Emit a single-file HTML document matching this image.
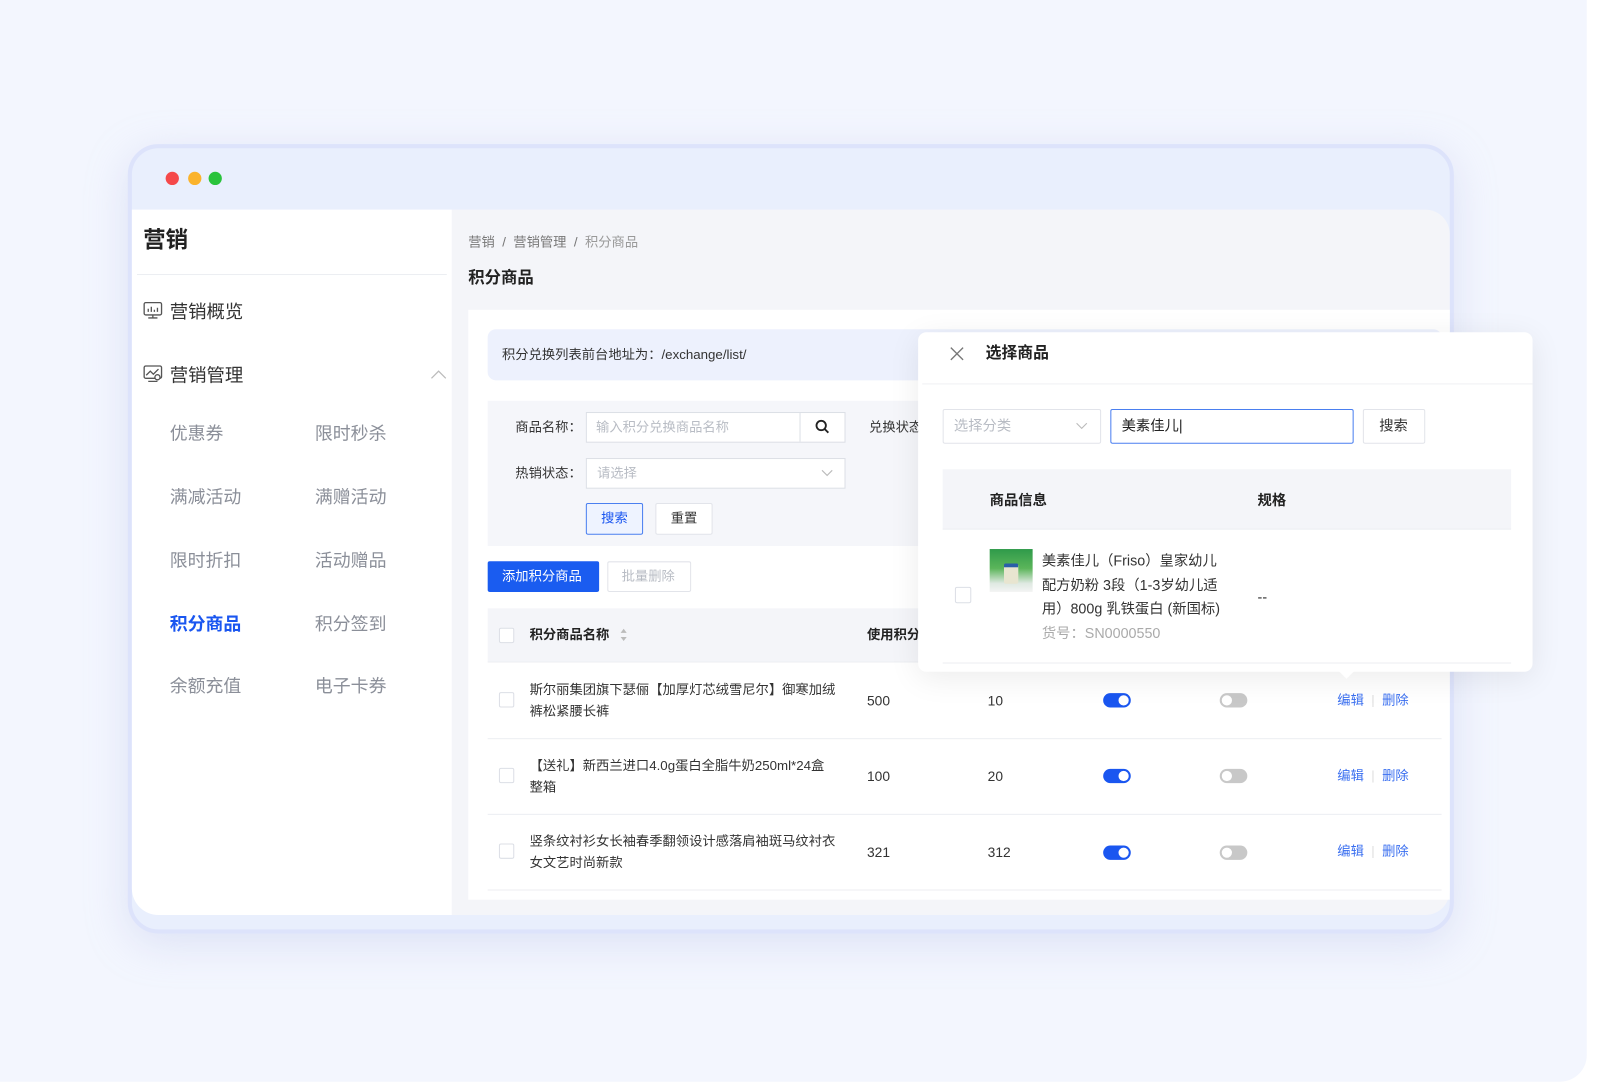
<!DOCTYPE html>
<html><head><meta charset="utf-8">
<style>
*{margin:0;padding:0;box-sizing:border-box}
html,body{width:1600px;height:1080px;overflow:hidden;background:#fff}
body{font-family:"Liberation Sans","Noto Sans CJK SC",sans-serif;color:#333}
#w{position:absolute;left:0;top:0;width:1565px;height:1057px;transform:scale(1.0224);transform-origin:0 0}
.a{position:absolute}
.t{position:absolute;white-space:nowrap;line-height:1}
.bg{left:0;top:0;width:1552px;height:1058px;background:#f3f6fe;border-radius:0 0 26px 0}
.win{left:125px;top:141px;width:1297px;height:772px;border:4px solid #dde3fb;border-radius:30px;background:#e9effd;box-shadow:0 10px 40px rgba(180,190,230,.35)}
.dot{width:13px;height:13px;border-radius:50%;top:168px}
.side{left:129px;top:205px;width:313px;height:690px;background:#fff;border-bottom-left-radius:26px}
.main{left:442px;top:205px;width:976px;height:690px;background:#f4f5f9;border-top-right-radius:24px;border-bottom-right-radius:24px}
.sub{font-size:17.5px;color:#8b8f99}
.cb{width:15px;height:15px;border:1px solid #dcdfe6;border-radius:2px;background:#fff}
.tog{width:27px;height:14px;border-radius:7px}
.tog i{position:absolute;top:2px;width:10px;height:10px;border-radius:50%;background:#fff}
.lk{font-size:13px;color:#3a6ff0}
.row{font-size:13px;color:#333;line-height:21px}
</style></head><body><div id="w">
<div class="a bg"></div>
<div class="a win"></div>
<div class="a dot" style="left:162px;background:#f5484a"></div>
<div class="a dot" style="left:184px;background:#fbb32c"></div>
<div class="a dot" style="left:204px;background:#2ac33c"></div>
<div class="a side"></div>
<div class="a main"></div>
<div class="t" style="left:140px;top:224px;font-size:22px;font-weight:bold;color:#222">营销</div>
<div class="a" style="left:134px;top:268px;width:303px;height:1px;background:#eceef2"></div>
<svg class="a" style="left:140px;top:295px" width="19" height="18" viewBox="0 0 19 18" fill="none" stroke="#555" stroke-width="1.3"><rect x="1" y="1" width="17" height="12" rx="1.5"/><path d="M5 10V7M8 10V5M11 10V8M14 10V6M5 16h9M9.5 13v3"/></svg>
<div class="t" style="left:166px;top:296px;font-size:18px;color:#333">营销概览</div>
<svg class="a" style="left:140px;top:357px" width="19" height="18" viewBox="0 0 19 18" fill="none" stroke="#555" stroke-width="1.3"><rect x="1" y="1" width="17" height="12" rx="1.5"/><path d="M3 10l4-4 3 3 5-5M5 16h9"/><circle cx="14" cy="12" r="2.5" fill="#fff"/></svg>
<div class="t" style="left:166px;top:358px;font-size:18px;color:#333">营销管理</div>
<svg class="a" style="left:421px;top:361px" width="16" height="10" viewBox="0 0 16 10" fill="none" stroke="#bbb" stroke-width="1.2"><path d="M1 9l7-7 7 7"/></svg>
<div class="t sub" style="left:166px;top:416px">优惠券</div><div class="t sub" style="left:308px;top:416px">限时秒杀</div>
<div class="t sub" style="left:166px;top:478px">满减活动</div><div class="t sub" style="left:308px;top:478px">满赠活动</div>
<div class="t sub" style="left:166px;top:540px">限时折扣</div><div class="t sub" style="left:308px;top:540px">活动赠品</div>
<div class="t sub" style="left:166px;top:602px;color:#1a56f0;font-weight:bold">积分商品</div><div class="t sub" style="left:308px;top:602px">积分签到</div>
<div class="t sub" style="left:166px;top:663px">余额充值</div><div class="t sub" style="left:308px;top:663px">电子卡券</div>
<div class="t" style="left:458px;top:230px;font-size:13px;color:#777">营销 &nbsp;/ &nbsp;营销管理 &nbsp;/ &nbsp;<span style="color:#999">积分商品</span></div>
<div class="t" style="left:458px;top:265px;font-size:16px;font-weight:bold;color:#222">积分商品</div>
<div class="a" style="left:458px;top:303px;width:960px;height:577px;background:#fff"></div>
<div class="a" style="left:477px;top:322px;width:933px;height:50px;background:#edf1fd;border-radius:8px"></div>
<div class="t" style="left:491px;top:340px;font-size:13px;color:#333">积分兑换列表前台地址为：/exchange/list/</div>
<div class="a" style="left:477px;top:392px;width:933px;height:142px;background:#f5f6fa"></div>
<div class="t" style="left:504px;top:411px;font-size:13px;color:#333">商品名称：</div>
<div class="a" style="left:573px;top:403px;width:254px;height:30px;background:#fff;border:1px solid #dcdfe6"></div>
<div class="a" style="left:782px;top:404px;width:1px;height:28px;background:#dcdfe6"></div>
<div class="t" style="left:583px;top:411px;font-size:13px;color:#b8bcc4">输入积分兑换商品名称</div>
<svg class="a" style="left:797px;top:410px" width="15" height="15" viewBox="0 0 15 15" fill="none" stroke="#222" stroke-width="1.8"><circle cx="6.2" cy="6.2" r="4.6"/><path d="M9.6 9.6l3.6 3.6"/></svg>
<div class="t" style="left:850px;top:411px;font-size:13px;color:#333">兑换状态</div>
<div class="t" style="left:504px;top:456px;font-size:13px;color:#333">热销状态：</div>
<div class="a" style="left:573px;top:448px;width:254px;height:30px;background:#fff;border:1px solid #dcdfe6"></div>
<div class="t" style="left:584px;top:456px;font-size:13px;color:#b8bcc4">请选择</div>
<svg class="a" style="left:803px;top:459px" width="12" height="8" viewBox="0 0 12 8" fill="none" stroke="#bbb" stroke-width="1.1"><path d="M1 1l5 5 5-5"/></svg>
<div class="a" style="left:573px;top:492px;width:56px;height:31px;background:#eef3ff;border:1px solid #4a7ff0;border-radius:2px"></div>
<div class="t" style="left:588px;top:500px;font-size:13px;color:#1a56f0">搜索</div>
<div class="a" style="left:641px;top:492px;width:56px;height:31px;background:#fff;border:1px solid #e2e4ea;border-radius:2px"></div>
<div class="t" style="left:656px;top:500px;font-size:13px;color:#333">重置</div>
<div class="a" style="left:477px;top:549px;width:109px;height:30px;background:#1a5cf0;border-radius:2px"></div>
<div class="t" style="left:491px;top:557px;font-size:13px;color:#fff">添加积分商品</div>
<div class="a" style="left:594px;top:549px;width:82px;height:30px;background:#fff;border:1px solid #e2e4ea;border-radius:2px"></div>
<div class="t" style="left:608px;top:557px;font-size:13px;color:#b8bcc4">批量删除</div>
<div class="a" style="left:477px;top:595px;width:933px;height:53px;background:#f4f5f9;border-bottom:1px solid #eceef2"></div>
<div class="a cb" style="left:488px;top:614px"></div>
<div class="t" style="left:518px;top:614px;font-size:13px;font-weight:bold;color:#222">积分商品名称</div>
<svg class="a" style="left:606px;top:614px" width="8" height="14" viewBox="0 0 8 14" fill="#bbb"><path d="M4 1l3 4H1zM4 13l3-4H1z"/></svg>
<div class="t" style="left:848px;top:614px;font-size:13px;font-weight:bold;color:#222">使用积分</div>
<div class="a" style="left:477px;top:722px;width:933px;height:1px;background:#eceef2"></div>
<div class="a" style="left:477px;top:796px;width:933px;height:1px;background:#eceef2"></div>
<div class="a" style="left:477px;top:870px;width:933px;height:1px;background:#eceef2"></div>
<div class="a cb" style="left:488px;top:677px"></div>
<div class="a row" style="left:518px;top:664px;white-space:nowrap">斯尔丽集团旗下瑟俪【加厚灯芯绒雪尼尔】御寒加绒<br>裤松紧腰长裤</div>
<div class="t" style="left:848px;top:679px;font-size:13.5px">500</div><div class="t" style="left:966px;top:679px;font-size:13.5px">10</div>
<div class="a cb" style="left:488px;top:751px"></div>
<div class="a row" style="left:518px;top:738px;white-space:nowrap">【送礼】新西兰进口4.0g蛋白全脂牛奶250ml*24盒<br>整箱</div>
<div class="t" style="left:848px;top:753px;font-size:13.5px">100</div><div class="t" style="left:966px;top:753px;font-size:13.5px">20</div>
<div class="a cb" style="left:488px;top:825px"></div>
<div class="a row" style="left:518px;top:812px;white-space:nowrap">竖条纹衬衫女长袖春季翻领设计感落肩袖斑马纹衬衣<br>女文艺时尚新款</div>
<div class="t" style="left:848px;top:827px;font-size:13.5px">321</div><div class="t" style="left:966px;top:827px;font-size:13.5px">312</div>
<div class="a tog" style="left:1079px;top:678px;background:#1a56f0"><i style="left:15px"></i></div>
<div class="a tog" style="left:1193px;top:678px;background:#c8c8c8"><i style="left:2px"></i></div>
<div class="a tog" style="left:1079px;top:752px;background:#1a56f0"><i style="left:15px"></i></div>
<div class="a tog" style="left:1193px;top:752px;background:#c8c8c8"><i style="left:2px"></i></div>
<div class="a tog" style="left:1079px;top:827px;background:#1a56f0"><i style="left:15px"></i></div>
<div class="a tog" style="left:1193px;top:827px;background:#c8c8c8"><i style="left:2px"></i></div>
<div class="t lk" style="left:1308px;top:678px">编辑 <span style="color:#ddd">&nbsp;|&nbsp;</span> 删除</div>
<div class="t lk" style="left:1308px;top:752px">编辑 <span style="color:#ddd">&nbsp;|&nbsp;</span> 删除</div>
<div class="t lk" style="left:1308px;top:826px">编辑 <span style="color:#ddd">&nbsp;|&nbsp;</span> 删除</div>
<div class="a" style="left:898px;top:325px;width:601px;height:332px;background:#fff;border-radius:8px;box-shadow:0 6px 30px rgba(0,0,0,.08)"></div>
<div class="a" style="left:1309px;top:656px;width:0;height:0;border-left:8px solid transparent;border-right:8px solid transparent;border-top:8px solid #fff"></div>
<svg class="a" style="left:929px;top:339px" width="14" height="14" viewBox="0 0 14 14" stroke="#777" stroke-width="1.3"><path d="M1 1l12 12M13 1L1 13"/></svg>
<div class="t" style="left:964px;top:338px;font-size:15.5px;font-weight:bold;color:#222">选择商品</div>
<div class="a" style="left:902px;top:375px;width:597px;height:1px;background:#f0f1f4"></div>
<div class="a" style="left:922px;top:400px;width:155px;height:34px;border:1px solid #e2e4ea;border-radius:2px"></div>
<div class="t" style="left:933px;top:409px;font-size:14px;color:#b8bcc4">选择分类</div>
<svg class="a" style="left:1052px;top:413px" width="12" height="8" viewBox="0 0 12 8" fill="none" stroke="#bbb" stroke-width="1.1"><path d="M1 1l5 5 5-5"/></svg>
<div class="a" style="left:1086px;top:400px;width:238px;height:34px;border:1px solid #4a7ff0;border-radius:2px"></div>
<div class="t" style="left:1097px;top:409px;font-size:14px;color:#222">美素佳儿|</div>
<div class="a" style="left:1333px;top:400px;width:61px;height:34px;border:1px solid #e2e4ea;border-radius:2px"></div>
<div class="t" style="left:1349px;top:409px;font-size:14px;color:#333">搜索</div>
<div class="a" style="left:922px;top:459px;width:556px;height:59px;background:#f4f5f9;border-bottom:1px solid #eceef2"></div>
<div class="t" style="left:968px;top:482px;font-size:14px;font-weight:bold;color:#222">商品信息</div>
<div class="t" style="left:1230px;top:482px;font-size:14px;font-weight:bold;color:#222">规格</div>
<div class="a cb" style="left:934px;top:574px;width:16px;height:16px"></div>
<div class="a" style="left:968px;top:537px;width:42px;height:42px;background:linear-gradient(180deg,#2f9a4a 0%,#5bb55a 45%,#dfe9e2 80%,#f4f4f4 100%)"></div>
<div class="a" style="left:982px;top:551px;width:14px;height:20px;background:#e8e5d0;border-radius:2px;border-top:4px solid #2a5fa8"></div>
<div class="a" style="left:1019px;top:537px;font-size:14px;line-height:23.5px;color:#333;white-space:nowrap">美素佳儿（Friso）皇家幼儿<br>配方奶粉 3段（1-3岁幼儿适<br>用）800g 乳铁蛋白 (新国标)</div>
<div class="t" style="left:1019px;top:612px;font-size:14px;color:#aaa">货号：SN0000550</div>
<div class="t" style="left:1230px;top:577px;font-size:14px;color:#333">--</div>
<div class="a" style="left:922px;top:648px;width:556px;height:1px;background:#eceef2"></div>
</div></body></html>
